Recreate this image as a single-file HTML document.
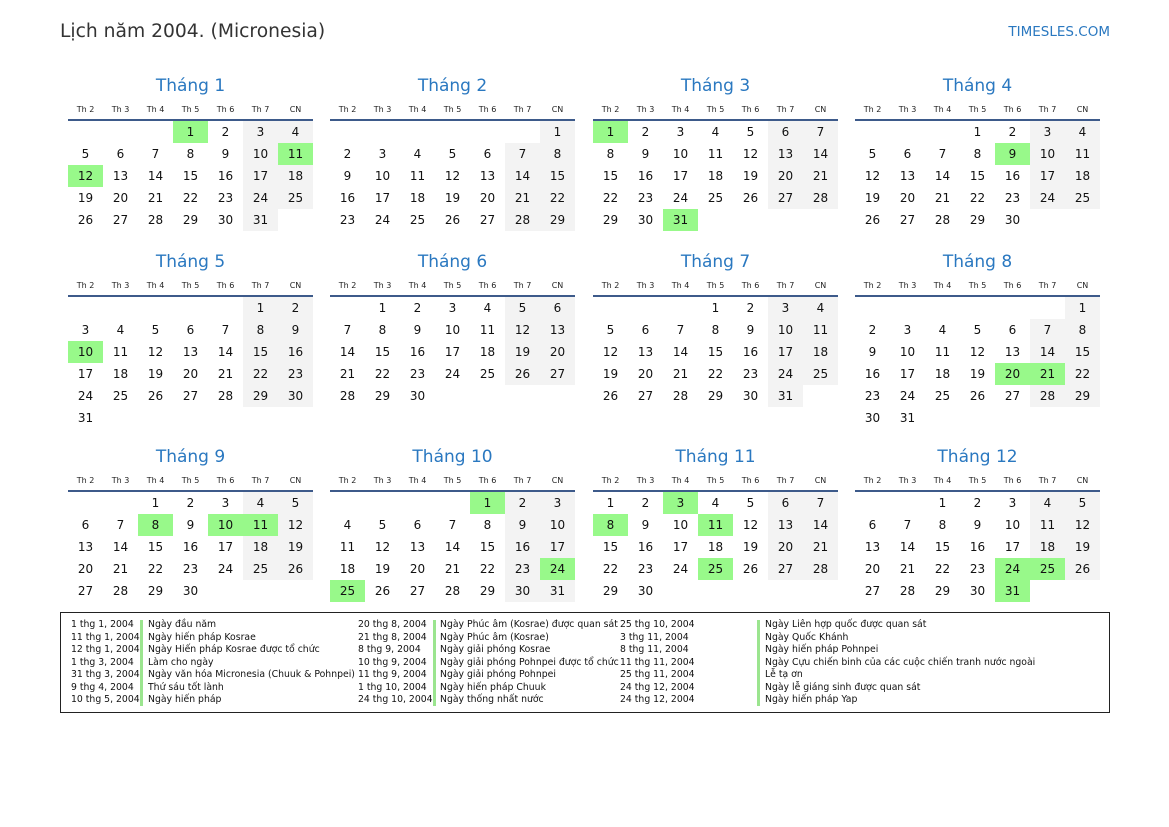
<!DOCTYPE html>
<html><head><meta charset="utf-8"><style>
*{margin:0;padding:0;box-sizing:border-box}
body{width:1169px;height:827px;background:#fff;position:relative;font-family:"DejaVu Sans","Liberation Sans",sans-serif;color:#111;overflow:hidden}
.ti{position:absolute;left:60px;top:21px;font-size:18.7px;color:#333}
.ts{position:absolute;right:59px;top:24px;font-size:13.5px;color:#2a78c0}
.m{position:absolute;width:245px}
.t{height:24px;line-height:26px;text-align:center;font-size:17px;color:#2a78c0}
.hd{display:grid;grid-template-columns:repeat(7,35px);height:24px;line-height:26px;font-size:8px;text-align:center;border-bottom:2px solid #3d5a8a;color:#222}
.g{display:grid;grid-template-columns:repeat(7,35px);grid-auto-rows:22px;font-size:12px;text-align:center}
.g>*{line-height:22px;font-style:normal;text-decoration:none;color:#111;display:block}
.g u{background:#f3f3f3}
.g em{background:#98f98a}
.lg{position:absolute;left:60px;top:612px;width:1050px;height:101px;border:1px solid #222;font-size:9.3px;color:#111}
.c{position:absolute;top:6px;line-height:12.5px;white-space:nowrap}
.bar{position:absolute;top:7px;width:3px;height:86px;background:#9be58f}
</style></head><body>
<div class="ti">Lịch năm 2004. (Micronesia)</div>
<div class="ts">TIMESLES.COM</div>

<div class="m" style="left:68px;top:73px"><div class="t">Tháng 1</div><div class="hd"><span>Th 2</span><span>Th 3</span><span>Th 4</span><span>Th 5</span><span>Th 6</span><span>Th 7</span><span>CN</span></div><div class="g"><i></i><i></i><i></i><em>1</em><a>2</a><u>3</u><u>4</u><a>5</a><a>6</a><a>7</a><a>8</a><a>9</a><u>10</u><em>11</em><em>12</em><a>13</a><a>14</a><a>15</a><a>16</a><u>17</u><u>18</u><a>19</a><a>20</a><a>21</a><a>22</a><a>23</a><u>24</u><u>25</u><a>26</a><a>27</a><a>28</a><a>29</a><a>30</a><u>31</u></div></div>

<div class="m" style="left:330px;top:73px"><div class="t">Tháng 2</div><div class="hd"><span>Th 2</span><span>Th 3</span><span>Th 4</span><span>Th 5</span><span>Th 6</span><span>Th 7</span><span>CN</span></div><div class="g"><i></i><i></i><i></i><i></i><i></i><i></i><u>1</u><a>2</a><a>3</a><a>4</a><a>5</a><a>6</a><u>7</u><u>8</u><a>9</a><a>10</a><a>11</a><a>12</a><a>13</a><u>14</u><u>15</u><a>16</a><a>17</a><a>18</a><a>19</a><a>20</a><u>21</u><u>22</u><a>23</a><a>24</a><a>25</a><a>26</a><a>27</a><u>28</u><u>29</u></div></div>

<div class="m" style="left:593px;top:73px"><div class="t">Tháng 3</div><div class="hd"><span>Th 2</span><span>Th 3</span><span>Th 4</span><span>Th 5</span><span>Th 6</span><span>Th 7</span><span>CN</span></div><div class="g"><em>1</em><a>2</a><a>3</a><a>4</a><a>5</a><u>6</u><u>7</u><a>8</a><a>9</a><a>10</a><a>11</a><a>12</a><u>13</u><u>14</u><a>15</a><a>16</a><a>17</a><a>18</a><a>19</a><u>20</u><u>21</u><a>22</a><a>23</a><a>24</a><a>25</a><a>26</a><u>27</u><u>28</u><a>29</a><a>30</a><em>31</em></div></div>

<div class="m" style="left:855px;top:73px"><div class="t">Tháng 4</div><div class="hd"><span>Th 2</span><span>Th 3</span><span>Th 4</span><span>Th 5</span><span>Th 6</span><span>Th 7</span><span>CN</span></div><div class="g"><i></i><i></i><i></i><a>1</a><a>2</a><u>3</u><u>4</u><a>5</a><a>6</a><a>7</a><a>8</a><em>9</em><u>10</u><u>11</u><a>12</a><a>13</a><a>14</a><a>15</a><a>16</a><u>17</u><u>18</u><a>19</a><a>20</a><a>21</a><a>22</a><a>23</a><u>24</u><u>25</u><a>26</a><a>27</a><a>28</a><a>29</a><a>30</a></div></div>

<div class="m" style="left:68px;top:249px"><div class="t">Tháng 5</div><div class="hd"><span>Th 2</span><span>Th 3</span><span>Th 4</span><span>Th 5</span><span>Th 6</span><span>Th 7</span><span>CN</span></div><div class="g"><i></i><i></i><i></i><i></i><i></i><u>1</u><u>2</u><a>3</a><a>4</a><a>5</a><a>6</a><a>7</a><u>8</u><u>9</u><em>10</em><a>11</a><a>12</a><a>13</a><a>14</a><u>15</u><u>16</u><a>17</a><a>18</a><a>19</a><a>20</a><a>21</a><u>22</u><u>23</u><a>24</a><a>25</a><a>26</a><a>27</a><a>28</a><u>29</u><u>30</u><a>31</a></div></div>

<div class="m" style="left:330px;top:249px"><div class="t">Tháng 6</div><div class="hd"><span>Th 2</span><span>Th 3</span><span>Th 4</span><span>Th 5</span><span>Th 6</span><span>Th 7</span><span>CN</span></div><div class="g"><i></i><a>1</a><a>2</a><a>3</a><a>4</a><u>5</u><u>6</u><a>7</a><a>8</a><a>9</a><a>10</a><a>11</a><u>12</u><u>13</u><a>14</a><a>15</a><a>16</a><a>17</a><a>18</a><u>19</u><u>20</u><a>21</a><a>22</a><a>23</a><a>24</a><a>25</a><u>26</u><u>27</u><a>28</a><a>29</a><a>30</a></div></div>

<div class="m" style="left:593px;top:249px"><div class="t">Tháng 7</div><div class="hd"><span>Th 2</span><span>Th 3</span><span>Th 4</span><span>Th 5</span><span>Th 6</span><span>Th 7</span><span>CN</span></div><div class="g"><i></i><i></i><i></i><a>1</a><a>2</a><u>3</u><u>4</u><a>5</a><a>6</a><a>7</a><a>8</a><a>9</a><u>10</u><u>11</u><a>12</a><a>13</a><a>14</a><a>15</a><a>16</a><u>17</u><u>18</u><a>19</a><a>20</a><a>21</a><a>22</a><a>23</a><u>24</u><u>25</u><a>26</a><a>27</a><a>28</a><a>29</a><a>30</a><u>31</u></div></div>

<div class="m" style="left:855px;top:249px"><div class="t">Tháng 8</div><div class="hd"><span>Th 2</span><span>Th 3</span><span>Th 4</span><span>Th 5</span><span>Th 6</span><span>Th 7</span><span>CN</span></div><div class="g"><i></i><i></i><i></i><i></i><i></i><i></i><u>1</u><a>2</a><a>3</a><a>4</a><a>5</a><a>6</a><u>7</u><u>8</u><a>9</a><a>10</a><a>11</a><a>12</a><a>13</a><u>14</u><u>15</u><a>16</a><a>17</a><a>18</a><a>19</a><em>20</em><em>21</em><u>22</u><a>23</a><a>24</a><a>25</a><a>26</a><a>27</a><u>28</u><u>29</u><a>30</a><a>31</a></div></div>

<div class="m" style="left:68px;top:444px"><div class="t">Tháng 9</div><div class="hd"><span>Th 2</span><span>Th 3</span><span>Th 4</span><span>Th 5</span><span>Th 6</span><span>Th 7</span><span>CN</span></div><div class="g"><i></i><i></i><a>1</a><a>2</a><a>3</a><u>4</u><u>5</u><a>6</a><a>7</a><em>8</em><a>9</a><em>10</em><em>11</em><u>12</u><a>13</a><a>14</a><a>15</a><a>16</a><a>17</a><u>18</u><u>19</u><a>20</a><a>21</a><a>22</a><a>23</a><a>24</a><u>25</u><u>26</u><a>27</a><a>28</a><a>29</a><a>30</a></div></div>

<div class="m" style="left:330px;top:444px"><div class="t">Tháng 10</div><div class="hd"><span>Th 2</span><span>Th 3</span><span>Th 4</span><span>Th 5</span><span>Th 6</span><span>Th 7</span><span>CN</span></div><div class="g"><i></i><i></i><i></i><i></i><em>1</em><u>2</u><u>3</u><a>4</a><a>5</a><a>6</a><a>7</a><a>8</a><u>9</u><u>10</u><a>11</a><a>12</a><a>13</a><a>14</a><a>15</a><u>16</u><u>17</u><a>18</a><a>19</a><a>20</a><a>21</a><a>22</a><u>23</u><em>24</em><em>25</em><a>26</a><a>27</a><a>28</a><a>29</a><u>30</u><u>31</u></div></div>

<div class="m" style="left:593px;top:444px"><div class="t">Tháng 11</div><div class="hd"><span>Th 2</span><span>Th 3</span><span>Th 4</span><span>Th 5</span><span>Th 6</span><span>Th 7</span><span>CN</span></div><div class="g"><a>1</a><a>2</a><em>3</em><a>4</a><a>5</a><u>6</u><u>7</u><em>8</em><a>9</a><a>10</a><em>11</em><a>12</a><u>13</u><u>14</u><a>15</a><a>16</a><a>17</a><a>18</a><a>19</a><u>20</u><u>21</u><a>22</a><a>23</a><a>24</a><em>25</em><a>26</a><u>27</u><u>28</u><a>29</a><a>30</a></div></div>

<div class="m" style="left:855px;top:444px"><div class="t">Tháng 12</div><div class="hd"><span>Th 2</span><span>Th 3</span><span>Th 4</span><span>Th 5</span><span>Th 6</span><span>Th 7</span><span>CN</span></div><div class="g"><i></i><i></i><a>1</a><a>2</a><a>3</a><u>4</u><u>5</u><a>6</a><a>7</a><a>8</a><a>9</a><a>10</a><u>11</u><u>12</u><a>13</a><a>14</a><a>15</a><a>16</a><a>17</a><u>18</u><u>19</u><a>20</a><a>21</a><a>22</a><a>23</a><em>24</em><em>25</em><u>26</u><a>27</a><a>28</a><a>29</a><a>30</a><em>31</em></div></div>

<div class="lg">
<div class="c" style="left:10px">1 thg 1, 2004<br>11 thg 1, 2004<br>12 thg 1, 2004<br>1 thg 3, 2004<br>31 thg 3, 2004<br>9 thg 4, 2004<br>10 thg 5, 2004</div>
<div class="bar" style="left:79px"></div>
<div class="c" style="left:87px">Ngày đầu năm<br>Ngày hiến pháp Kosrae<br>Ngày Hiến pháp Kosrae được tổ chức<br>Làm cho ngày<br>Ngày văn hóa Micronesia (Chuuk &amp; Pohnpei)<br>Thứ sáu tốt lành<br>Ngày hiến pháp</div>
<div class="c" style="left:297px">20 thg 8, 2004<br>21 thg 8, 2004<br>8 thg 9, 2004<br>10 thg 9, 2004<br>11 thg 9, 2004<br>1 thg 10, 2004<br>24 thg 10, 2004</div>
<div class="bar" style="left:372px"></div>
<div class="c" style="left:379px">Ngày Phúc âm (Kosrae) được quan sát<br>Ngày Phúc âm (Kosrae)<br>Ngày giải phóng Kosrae<br>Ngày giải phóng Pohnpei được tổ chức<br>Ngày giải phóng Pohnpei<br>Ngày hiến pháp Chuuk<br>Ngày thống nhất nước</div>
<div class="c" style="left:559px">25 thg 10, 2004<br>3 thg 11, 2004<br>8 thg 11, 2004<br>11 thg 11, 2004<br>25 thg 11, 2004<br>24 thg 12, 2004<br>24 thg 12, 2004</div>
<div class="bar" style="left:696px"></div>
<div class="c" style="left:704px">Ngày Liên hợp quốc được quan sát<br>Ngày Quốc Khánh<br>Ngày hiến pháp Pohnpei<br>Ngày Cựu chiến binh của các cuộc chiến tranh nước ngoài<br>Lễ tạ ơn<br>Ngày lễ giáng sinh được quan sát<br>Ngày hiến pháp Yap</div>
</div>
</body></html>
